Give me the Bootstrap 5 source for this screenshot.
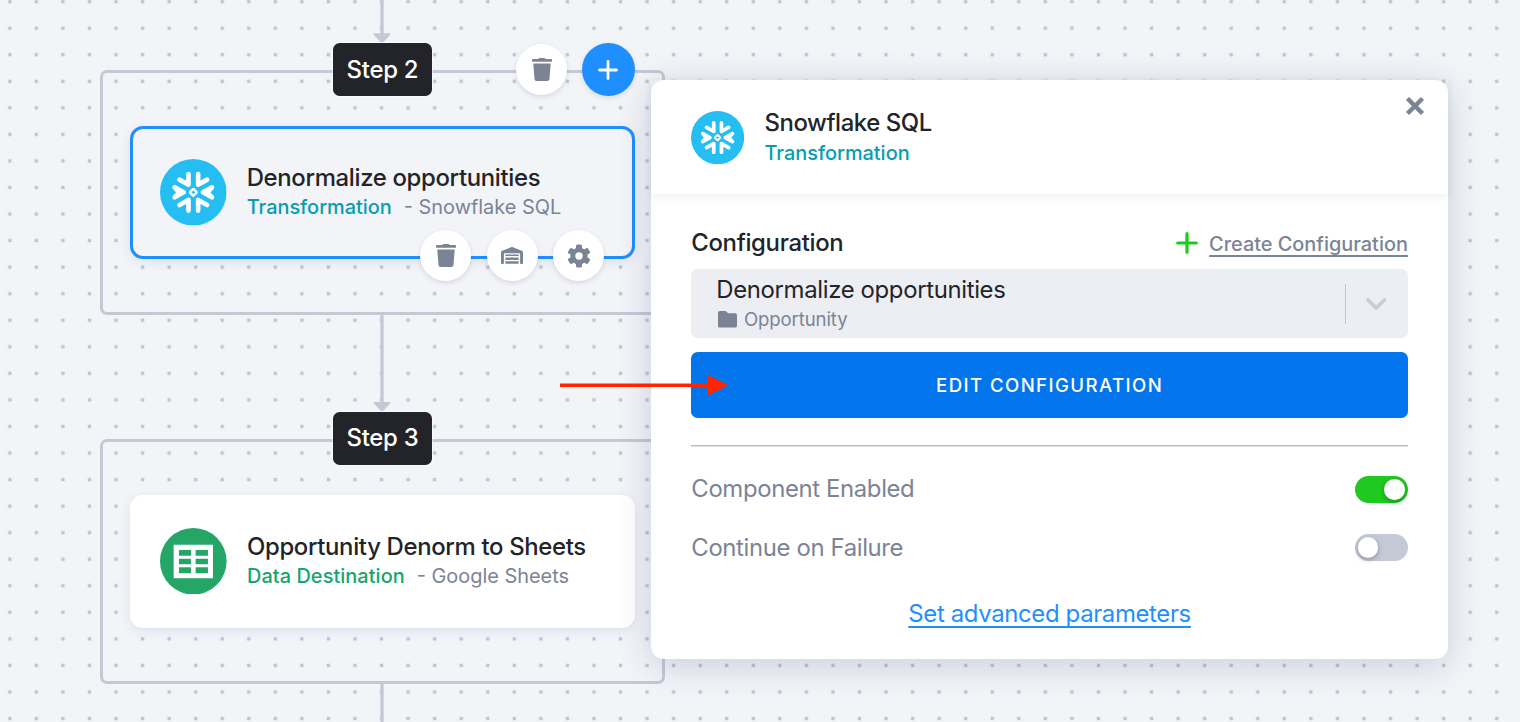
<!DOCTYPE html>
<html lang="en">
<head>
<meta charset="utf-8">
<meta name="viewport" content="width=device-width, initial-scale=1">
<title>Flow builder</title>
<link href="https://cdn.jsdelivr.net/npm/bootstrap@5.3.0/dist/css/bootstrap.min.css" rel="stylesheet">
<style>
  :root { --line:#c4c9d6; --ink:#222429; --muted:#7b8495; --blue:#1f8fff; --teal:#069db0; --green:#14a570; }
  body { font-family: Inter, "Liberation Sans", sans-serif; color: var(--ink); background:#f2f4f8; }
  .canvas { width:1520px; height:722px; background:#f2f4f8; }
  .dots { inset:0; }
  .flow { width:564.2px; margin-left:100.4px; }
  .link-line { height:43px; }
  .link-line.mid { height:96.5px; }
  .link-line svg { display:block; }
  .phase { border:3.3px solid var(--line); border-radius:7px; height:245px; margin-top:27px; padding:53.3px 27px 0; }
  .step-row { top:-30px; }
  .step-label { height:53.3px; padding:0 13.3px; background:#222429; border-radius:6.6px; font-size:23.9px; font-weight:500; letter-spacing:-.25px; box-shadow:0 0 0 1px #fff8; }
  .tools-top { top:-30px; right:26.6px; gap:14.6px; }
  .tools-task { bottom:-25.4px; right:27.4px; gap:15.4px; }
  .rnd { width:51px; height:51px; border-radius:50%; background:#fff; color:var(--muted); box-shadow:0 2px 5px rgba(34,36,41,.13); }
  .rnd-add { width:53.2px; height:53.2px; background:var(--blue); color:#fff; }
  .task { width:504.2px; height:132.8px; border-radius:13px; padding:0 30px; background:#fff; box-shadow:0 3px 11px rgba(20,40,90,.09); }
  .task.picked { background:#f2f4f8; border:3.3px solid var(--blue); padding:0 26.7px; }
  .task-name { font-size:23.9px; line-height:30px; font-weight:500; letter-spacing:-.33px; }
  .task-sub { font-size:19.9px; line-height:29px; color:var(--muted); }
  .kind { font-weight:500; }
  .teal { color:var(--teal); } .green { color:var(--green); letter-spacing:.07px; }
  .panel { left:651.3px; top:80px; width:796.6px; height:578.6px; border-radius:13px; background:#fff; box-shadow:0 6px 34px rgba(30,35,90,.18); }
  .panel-head { height:114.4px; padding:0 40px; box-shadow:0 2px 8px rgba(34,36,41,.08); }
  .panel-title { padding-top:2px; }
  .panel-head .task-name { letter-spacing:-.42px; }
  .panel-head .task-sub { line-height:30px; }
  .closer { top:16px; right:23.2px; color:var(--muted); }
  .panel-body { padding:34px 40px 0; }
  .conf-row { height:30px; margin-bottom:10.7px; }
  .create-plus { margin-right:10.7px; }
  .create { color:var(--muted); font-size:19.9px; font-weight:500; text-decoration:underline; text-underline-offset:3.5px; text-decoration-thickness:1.6px; margin-top:3px; }
  .picker { height:69.4px; background:#edeef3; border-radius:6.6px; padding-left:25px; margin-bottom:13.3px; }
  .picker-text { padding-top:2px; }
  .picker-main { font-size:23.9px; line-height:30px; letter-spacing:-.34px; }
  .picker-sub { font-size:18.6px; line-height:29px; letter-spacing:-.12px; color:var(--muted); }
  .folder { margin:0 6.6px 0 2px; }
  .picker-sep { width:1.6px; height:40px; background:#c4c4c6; }
  .edit { height:66.4px; background:#0275ec; color:#fff; border:0; border-radius:6.6px; font-size:18.6px; font-weight:500; letter-spacing:1.42px; line-height:28px; padding:0; }
  .edit:hover { background:#0268d2; color:#fff; }
  .rule { height:2px; background:#dcdfe8; border-top:1px solid #b4bbcb; margin-top:26.4px; }
  .opt { height:40px; font-size:23.9px; letter-spacing:-.36px; color:var(--muted); }
  .opt-first { margin-top:22.8px; }
  .opt-next { margin-top:18.2px; }
  .sw { width:53.2px; height:26.6px; border-radius:14px; background:#c4c9d6; padding:0 3px; }
  .sw.on { background:#1fc91f; }
  .knob { width:20.6px; height:20.6px; border-radius:50%; background:#fff; box-shadow:0 2px 5px rgba(0,0,0,.28); }
  .adv-row { margin-top:28.9px; }
  .adv { color:var(--blue); font-size:23.9px; letter-spacing:-.34px; text-decoration:underline; text-underline-offset:3.5px; text-decoration-thickness:1.5px; }
  .pointer { left:560px; top:375px; }
</style>
</head>
<body>
<svg width="0" height="0" class="position-absolute" aria-hidden="true">
  <defs>
    <symbol id="i-snow" viewBox="0 0 200 200">
      <circle cx="100" cy="100" r="100" fill="#24bef2"/>
      <g fill="none" stroke="#fff" stroke-width="14" stroke-linecap="round" stroke-linejoin="round">
        <path d="M85.500 45V77L58.500 62M114.500 45V77L141.500 62M85.500 155V123L58.500 138M114.500 155V123L141.500 138"/>
        <path fill="#fff" d="M44 85L71 100L44 115L58 100ZM156 85L129 100L156 115L142 100Z"/>
        <rect x="92.500" y="92.500" width="15" height="15" rx="2" stroke-width="7.500" transform="rotate(45 100 100)"/>
      </g>
    </symbol>
    <symbol id="i-trash" viewBox="0 0 20 23">
      <path fill="currentColor" d="M6.500 1C6.800.300 7.200 0 8 0h4c.800 0 1.200.300 1.500 1H19c.600 0 1 .400 1 .900v1c0 .500-.400.900-1 .900H1c-.600 0-1-.400-1-.900v-1C0 1.400.400 1 1 1zM1.300 5.400h17.400L17.500 21c-.100 1.200-1 2-2.100 2H4.600c-1.100 0-2-.800-2.100-2z"/>
    </symbol>
  </defs>
</svg>
<main class="canvas position-relative overflow-hidden">
  <svg class="dots position-absolute" width="1520" height="722" aria-hidden="true">
    <defs><pattern id="dotgrid" width="26.552" height="26.552" x="-3.450" y="-11.640" patternUnits="userSpaceOnUse"><rect x="11.550" y="11.550" width="3.450" height="3.450" fill="#bfc5d3"/></pattern></defs>
    <rect width="1520" height="722" fill="url(#dotgrid)"/>
  </svg>

  <div class="flow position-relative">
    <div class="link-line d-flex justify-content-center"><svg width="18" height="43"><path d="M9 0V34" stroke="#c4c9d6" stroke-width="3.300"/><path d="M1.500 33.300h15c.900 0 1.100 1 .600 1.700L10.600 42c-.900 1-2.300 1-3.200 0L.900 35c-.500-.700-.300-1.700.600-1.700z" fill="#c4c9d6"/></svg></div>
    <section class="phase position-relative">
      <div class="step-row position-absolute start-0 end-0 d-flex justify-content-center"><div class="step-label d-flex align-items-center text-white"><span>Step 2</span></div></div>
      <div class="tools-top position-absolute d-flex align-items-center">
        <span class="rnd d-flex align-items-center justify-content-center"><svg width="20" height="23"><use href="#i-trash"/></svg></span>
        <span class="rnd rnd-add d-flex align-items-center justify-content-center"><svg width="20" height="20" viewBox="0 0 20 20"><path d="M10 1.500v17M1.500 10h17" stroke="currentColor" stroke-width="2.800" stroke-linecap="round"/></svg></span>
      </div>
      <div class="task picked position-relative d-flex align-items-center">
        <svg class="flex-shrink-0" width="66.600" height="66.600"><use href="#i-snow"/></svg>
        <div class="ms-3 ps-1">
          <div class="task-name">Denormalize opportunities</div>
          <div class="task-sub"><span class="kind teal">Transformation</span><span class="ms-2 ps-1">- Snowflake SQL</span></div>
        </div>
        <div class="tools-task position-absolute d-flex">
          <span class="rnd d-flex align-items-center justify-content-center"><svg width="20" height="23"><use href="#i-trash"/></svg></span>
          <span class="rnd d-flex align-items-center justify-content-center"><svg width="22" height="17" viewBox="0 0 22 17"><path fill="currentColor" d="M10.200.200c.500-.200 1.100-.200 1.600 0l9 3.500c.700.300 1.200.900 1.200 1.600V16c0 .600-.300.900-.800.900h-1.300c-.500 0-.800-.300-.800-.900V7.200c0-.600-.400-1-1-1H3.900c-.600 0-1 .400-1 1V16c0 .600-.300.900-.800.900H.800c-.500 0-.800-.300-.800-.900V5.300c0-.700.500-1.300 1.200-1.600zM4.400 7.400h13.200v1.700H4.400zM4.400 10.400h13.200v2.500H4.400zM4.400 14.200h13.200v2.600H4.400z"/></svg></span>
          <span class="rnd d-flex align-items-center justify-content-center"><svg width="24" height="24" viewBox="-12 -12 24 24"><g fill="currentColor"><circle r="8.600"/><rect x="-3" y="-11.600" width="6" height="23.200" rx="1.500"/><rect x="-3" y="-11.600" width="6" height="23.200" rx="1.500" transform="rotate(60)"/><rect x="-3" y="-11.600" width="6" height="23.200" rx="1.500" transform="rotate(120)"/></g><circle r="3.700" fill="#fff"/></svg></span>
        </div>
      </div>
    </section>
    <div class="link-line mid d-flex justify-content-center"><svg width="18" height="96.600"><path d="M9 0V88" stroke="#c4c9d6" stroke-width="3.300"/><path transform="translate(0 53.600)" d="M1.500 33.300h15c.900 0 1.100 1 .600 1.700L10.600 42c-.900 1-2.300 1-3.200 0L.900 35c-.500-.700-.300-1.700.600-1.700z" fill="#c4c9d6"/></svg></div>
    <section class="phase position-relative">
      <div class="step-row position-absolute start-0 end-0 d-flex justify-content-center"><div class="step-label d-flex align-items-center text-white"><span>Step 3</span></div></div>
      <div class="task d-flex align-items-center">
        <svg class="flex-shrink-0" width="66.600" height="66.600" viewBox="0 0 200 200"><circle cx="100" cy="100" r="100" fill="#25a667"/><path fill="#fff" fill-rule="evenodd" d="M41 50h118v101H41zM57 66v17h36V66zM107 66v17h37V66zM57 92v17h36V92zM107 92v17h37V92zM57 118v18h36v-18zM107 118v18h37v-18z"/></svg>
        <div class="ms-3 ps-1">
          <div class="task-name">Opportunity Denorm to Sheets</div>
          <div class="task-sub"><span class="kind green">Data Destination</span><span class="ms-2 ps-1">- Google Sheets</span></div>
        </div>
      </div>
    </section>
    <div class="link-line d-flex justify-content-center"><svg width="18" height="43"><path d="M9 0V43" stroke="#c4c9d6" stroke-width="3.300"/></svg></div>
  </div>

  <aside class="panel position-absolute">
    <header class="panel-head position-relative d-flex align-items-center">
      <svg class="flex-shrink-0" width="53.200" height="53.200"><use href="#i-snow"/></svg>
      <div class="panel-title ms-3 ps-1">
        <div class="task-name">Snowflake SQL</div>
        <div class="task-sub"><span class="kind teal">Transformation</span></div>
      </div>
      <svg class="closer position-absolute" width="20" height="20" viewBox="0 0 20 20"><path d="M2.500 2.500l15 15M17.500 2.500l-15 15" stroke="currentColor" stroke-width="4.500"/></svg>
    </header>
    <div class="panel-body">
      <div class="conf-row d-flex align-items-center justify-content-between">
        <div class="task-name">Configuration</div>
        <div class="d-flex align-items-center">
          <svg class="create-plus" width="22" height="22" viewBox="0 0 22 22"><path d="M11 1.700v18.600M1.700 11h18.600" stroke="#1fc91f" stroke-width="3.200" stroke-linecap="round"/></svg>
          <a class="create" href="#">Create Configuration</a>
        </div>
      </div>
      <div class="picker d-flex align-items-center justify-content-between">
        <div class="picker-text">
          <div class="picker-main">Denormalize opportunities</div>
          <div class="picker-sub d-flex align-items-center"><svg class="folder" width="19" height="16.600" viewBox="0 0 19.500 17"><path fill="#7b8495" d="M2 0h5.300c.600 0 1 .200 1.400.600l1.600 1.700H17.500c1.200 0 2 .800 2 2V15c0 1.200-.800 2-2 2H2c-1.200 0-2-.800-2-2V2C0 .800.800 0 2 0z"/></svg><span>Opportunity</span></div>
        </div>
        <div class="d-flex align-items-center"><div class="picker-sep"></div><svg width="61.500" height="20" viewBox="0 0 61.500 20"><path d="M22 6l8.200 8 8.200-8" fill="none" stroke="#ccc" stroke-width="3.600" stroke-linecap="round" stroke-linejoin="round"/></svg></div>
      </div>
      <button class="edit btn w-100 d-block">EDIT CONFIGURATION</button>
      <div class="rule"></div>
      <div class="opt opt-first d-flex align-items-center justify-content-between"><span>Component Enabled</span><div class="sw on d-flex align-items-center justify-content-end"><div class="knob"></div></div></div>
      <div class="opt opt-next d-flex align-items-center justify-content-between"><span>Continue on Failure</span><div class="sw d-flex align-items-center"><div class="knob"></div></div></div>
      <div class="adv-row text-center"><a class="adv" href="#">Set advanced parameters</a></div>
    </div>
  </aside>

  <svg class="pointer position-absolute" width="170" height="22" viewBox="0 0 170 22"><path d="M0 8.400h147.600V0L168.500 10.200 147.600 20.500V12.100H0z" fill="#ff2500"/></svg>
</main>
<script src="https://cdn.jsdelivr.net/npm/bootstrap@5.3.0/dist/js/bootstrap.bundle.min.js"></script>
</body>
</html>
